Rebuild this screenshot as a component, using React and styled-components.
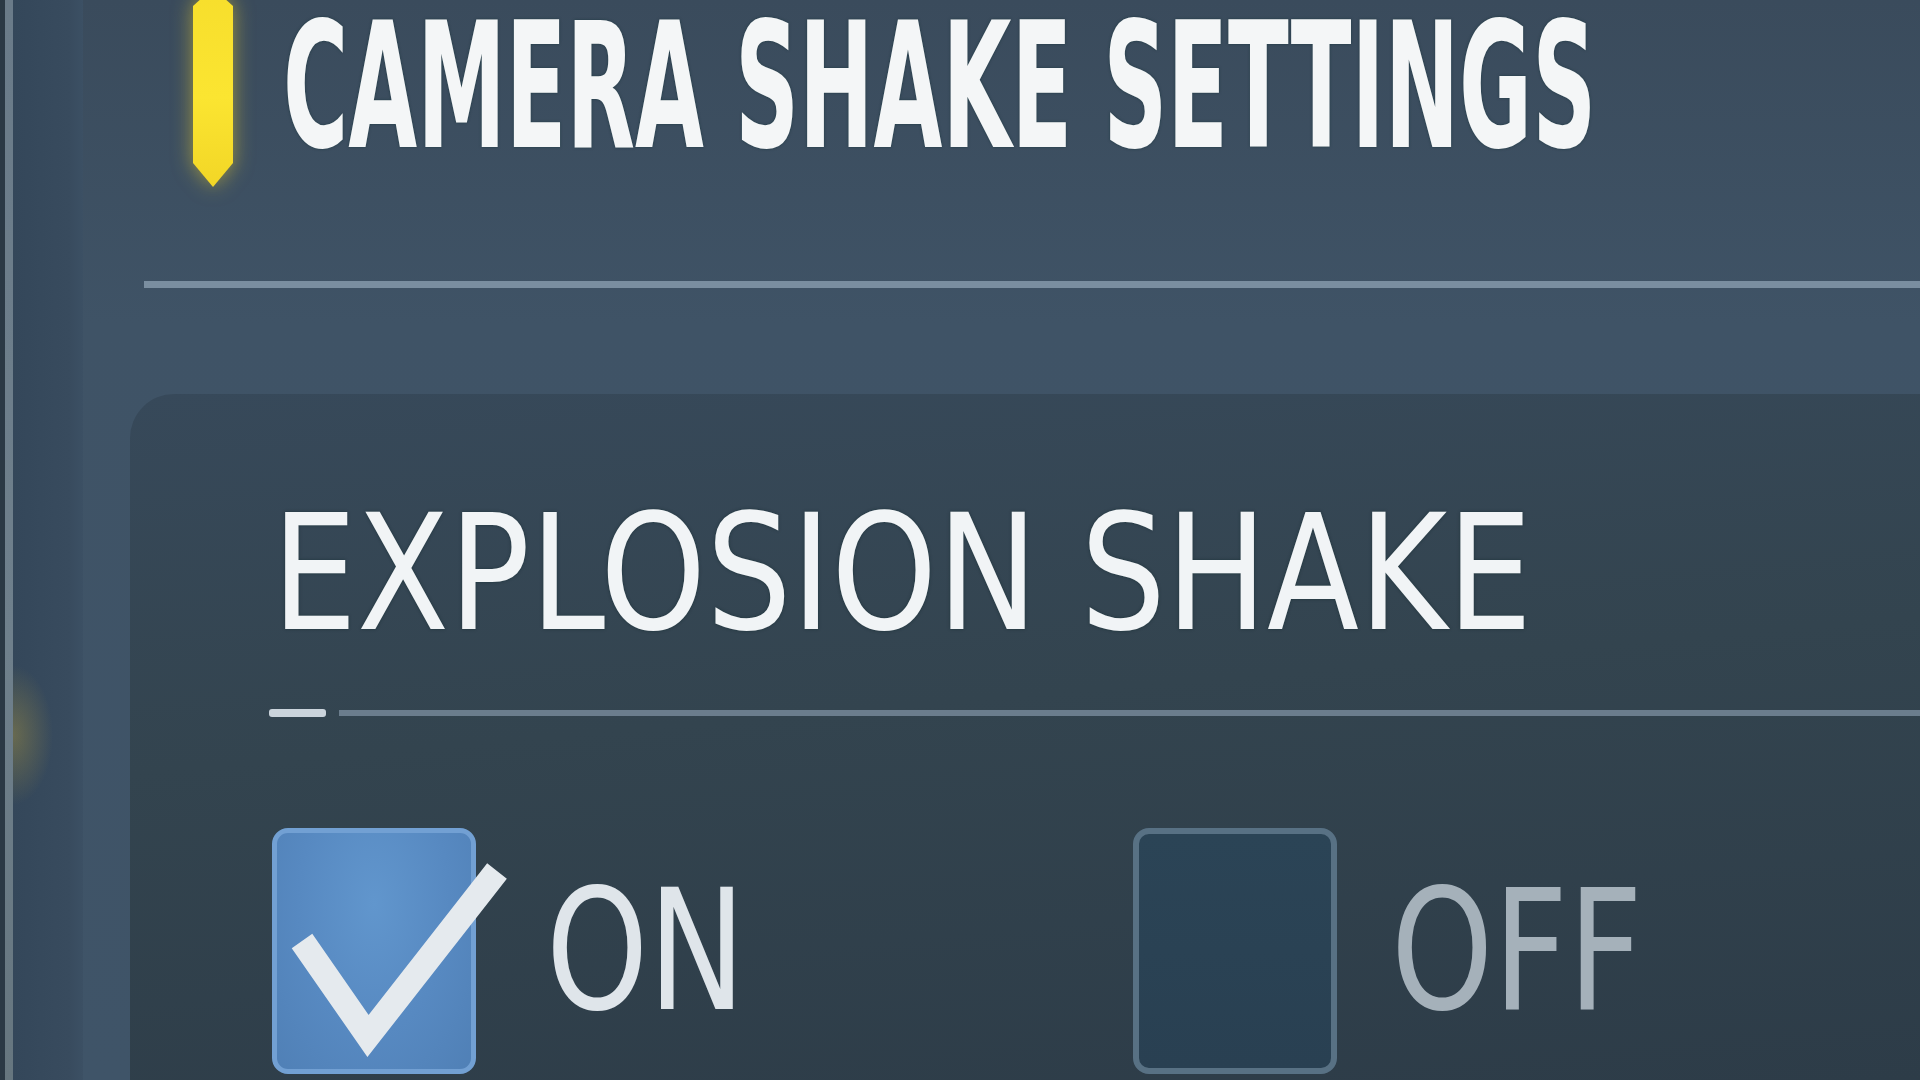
import React from 'react';
import styled, { createGlobalStyle, css } from 'styled-components';

const GlobalStyle = createGlobalStyle`
  html, body {
    margin: 0;
    padding: 0;
    width: 1920px;
    height: 1080px;
    overflow: hidden;
    background: #2c3a46;
  }
`;

const App = () => {
  return (
    <>
      <GlobalStyle />
      <Screen>
        <Rail>
          <RailEdge />
          <RailBand />
        </Rail>
        <Panel>
          <Header>
            <MarkerGlow>
              <Marker />
            </MarkerGlow>
            <Title>CAMERA SHAKE SETTINGS</Title>
          </Header>
          <Divider />
          <Card>
            <OptionTitle>EXPLOSION SHAKE</OptionTitle>
            <Underline>
              <Dash />
              <Rule />
            </Underline>
            <Choices>
              <Choice gap={70}>
                <Box checked>
                  <Check viewBox="0 0 240 250">
                    <polyline points="30,113 96,208 225,43" />
                  </Check>
                </Box>
                <ChoiceLabel checked>ON</ChoiceLabel>
              </Choice>
              <Choice gap={54}>
                <Box />
                <ChoiceLabel>OFF</ChoiceLabel>
              </Choice>
            </Choices>
          </Card>
        </Panel>
      </Screen>
    </>
  );
};

const Screen = styled.div`
  display: flex;
  width: 1920px;
  height: 1080px;
  overflow: hidden;
  font-family: 'DejaVu Sans', 'Liberation Sans', sans-serif;
`;

const Rail = styled.div`
  display: flex;
  width: 83px;
  flex-shrink: 0;
  background: #2b3945;
  padding-left: 5px;
  box-sizing: border-box;
`;

const RailEdge = styled.div`
  width: 8px;
  background: linear-gradient(180deg, #6a7b89 0%, #6f808c 60%, #66767f 100%);
`;

const RailBand = styled.div`
  flex: 1;
  background:
    radial-gradient(ellipse 40px 70px at 0% 735px, rgba(200, 170, 60, 0.35), transparent),
    linear-gradient(90deg, #34475a 0%, #384b5e 80%, #3c5064 100%);
`;

const Panel = styled.div`
  flex: 1;
  display: flex;
  flex-direction: column;
  background: linear-gradient(180deg, #3a4b5c 0%, #3f5366 30%, #3f5468 100%);
`;

const Header = styled.div`
  height: 281px;
  display: flex;
  align-items: flex-start;
  padding-left: 110px;
  gap: 50px;
`;

const MarkerGlow = styled.div`
  margin-top: -12px;
  filter: drop-shadow(0 0 10px rgba(240, 210, 40, 0.55));
`;

const Marker = styled.div`
  width: 40px;
  height: 199px;
  background: linear-gradient(180deg, #f7de2c 0%, #fbe531 55%, #f2d626 100%);
  clip-path: polygon(50% 0, 100% 9%, 100% 88%, 50% 100%, 0 88%, 0 9%);
`;

/* narrow game-style lettering: small size stretched vertically */
const Title = styled.div`
  font-size: 89px;
  line-height: 1;
  font-weight: 700;
  color: #f4f6f7;
  white-space: nowrap;
  transform: scaleY(1.955);
  transform-origin: left top;
  text-shadow: 0 0 2px rgba(0, 40, 40, 0.5);
`;

const Divider = styled.div`
  height: 7px;
  margin-left: 61px;
  background: #7a8ea0;
  flex-shrink: 0;
`;

const Card = styled.div`
  flex: 1;
  margin-top: 106px;
  margin-left: 47px;
  border-top-left-radius: 44px;
  padding: 100px 0 0 142px;
  background: linear-gradient(175deg, #37495a 0%, #33444f 45%, #2d3c48 100%);
  display: flex;
  flex-direction: column;
`;

const OptionTitle = styled.div`
  font-size: 134.5px;
  line-height: 1;
  font-weight: 400;
  color: #f1f4f6;
  white-space: nowrap;
  transform: scaleY(1.197);
  transform-origin: left top;
  text-shadow: 0 0 3px rgba(0, 30, 30, 0.45);
`;

const Underline = styled.div`
  display: flex;
  align-items: center;
  gap: 13px;
  margin-top: 79px;
  margin-left: -3px;
  height: 10px;
`;

const Dash = styled.div`
  width: 57px;
  height: 8px;
  border-radius: 3px;
  background: #cbd4dc;
`;

const Rule = styled.div`
  flex: 1;
  height: 6px;
  background: #6b7d8d;
`;

const Choices = styled.div`
  display: grid;
  grid-template-columns: 861px auto;
  margin-top: 110px;
`;

const Choice = styled.div`
  display: flex;
  align-items: center;
  gap: ${props => props.gap}px;
`;

const Box = styled.div`
  position: relative;
  width: 204px;
  height: 246px;
  box-sizing: border-box;
  border-radius: 16px;
  flex-shrink: 0;

  ${props =>
    props.checked
      ? css`
          border: 5px solid #72a0d3;
          background: radial-gradient(ellipse at 50% 30%, #6196cd 0%, #5789c1 55%, #5080b6 100%);
        `
      : css`
          border: 6px solid #587184;
          background: linear-gradient(180deg, #2b4456 0%, #294052 100%);
        `}
`;

const Check = styled.svg`
  position: absolute;
  left: -5px;
  top: -5px;
  width: 240px;
  height: 250px;
  overflow: visible;

  polyline {
    fill: none;
    stroke: #e5eaee;
    stroke-width: 25;
    stroke-linejoin: miter;
    stroke-linecap: butt;
  }
`;

const ChoiceLabel = styled.div`
  font-size: 130px;
  line-height: 1;
  font-weight: 400;
  white-space: nowrap;
  transform: scaleY(1.285);
  transform-origin: left center;
  color: ${props => (props.checked ? '#dfe5ea' : '#a5b1ba')};
`;

export default App;
